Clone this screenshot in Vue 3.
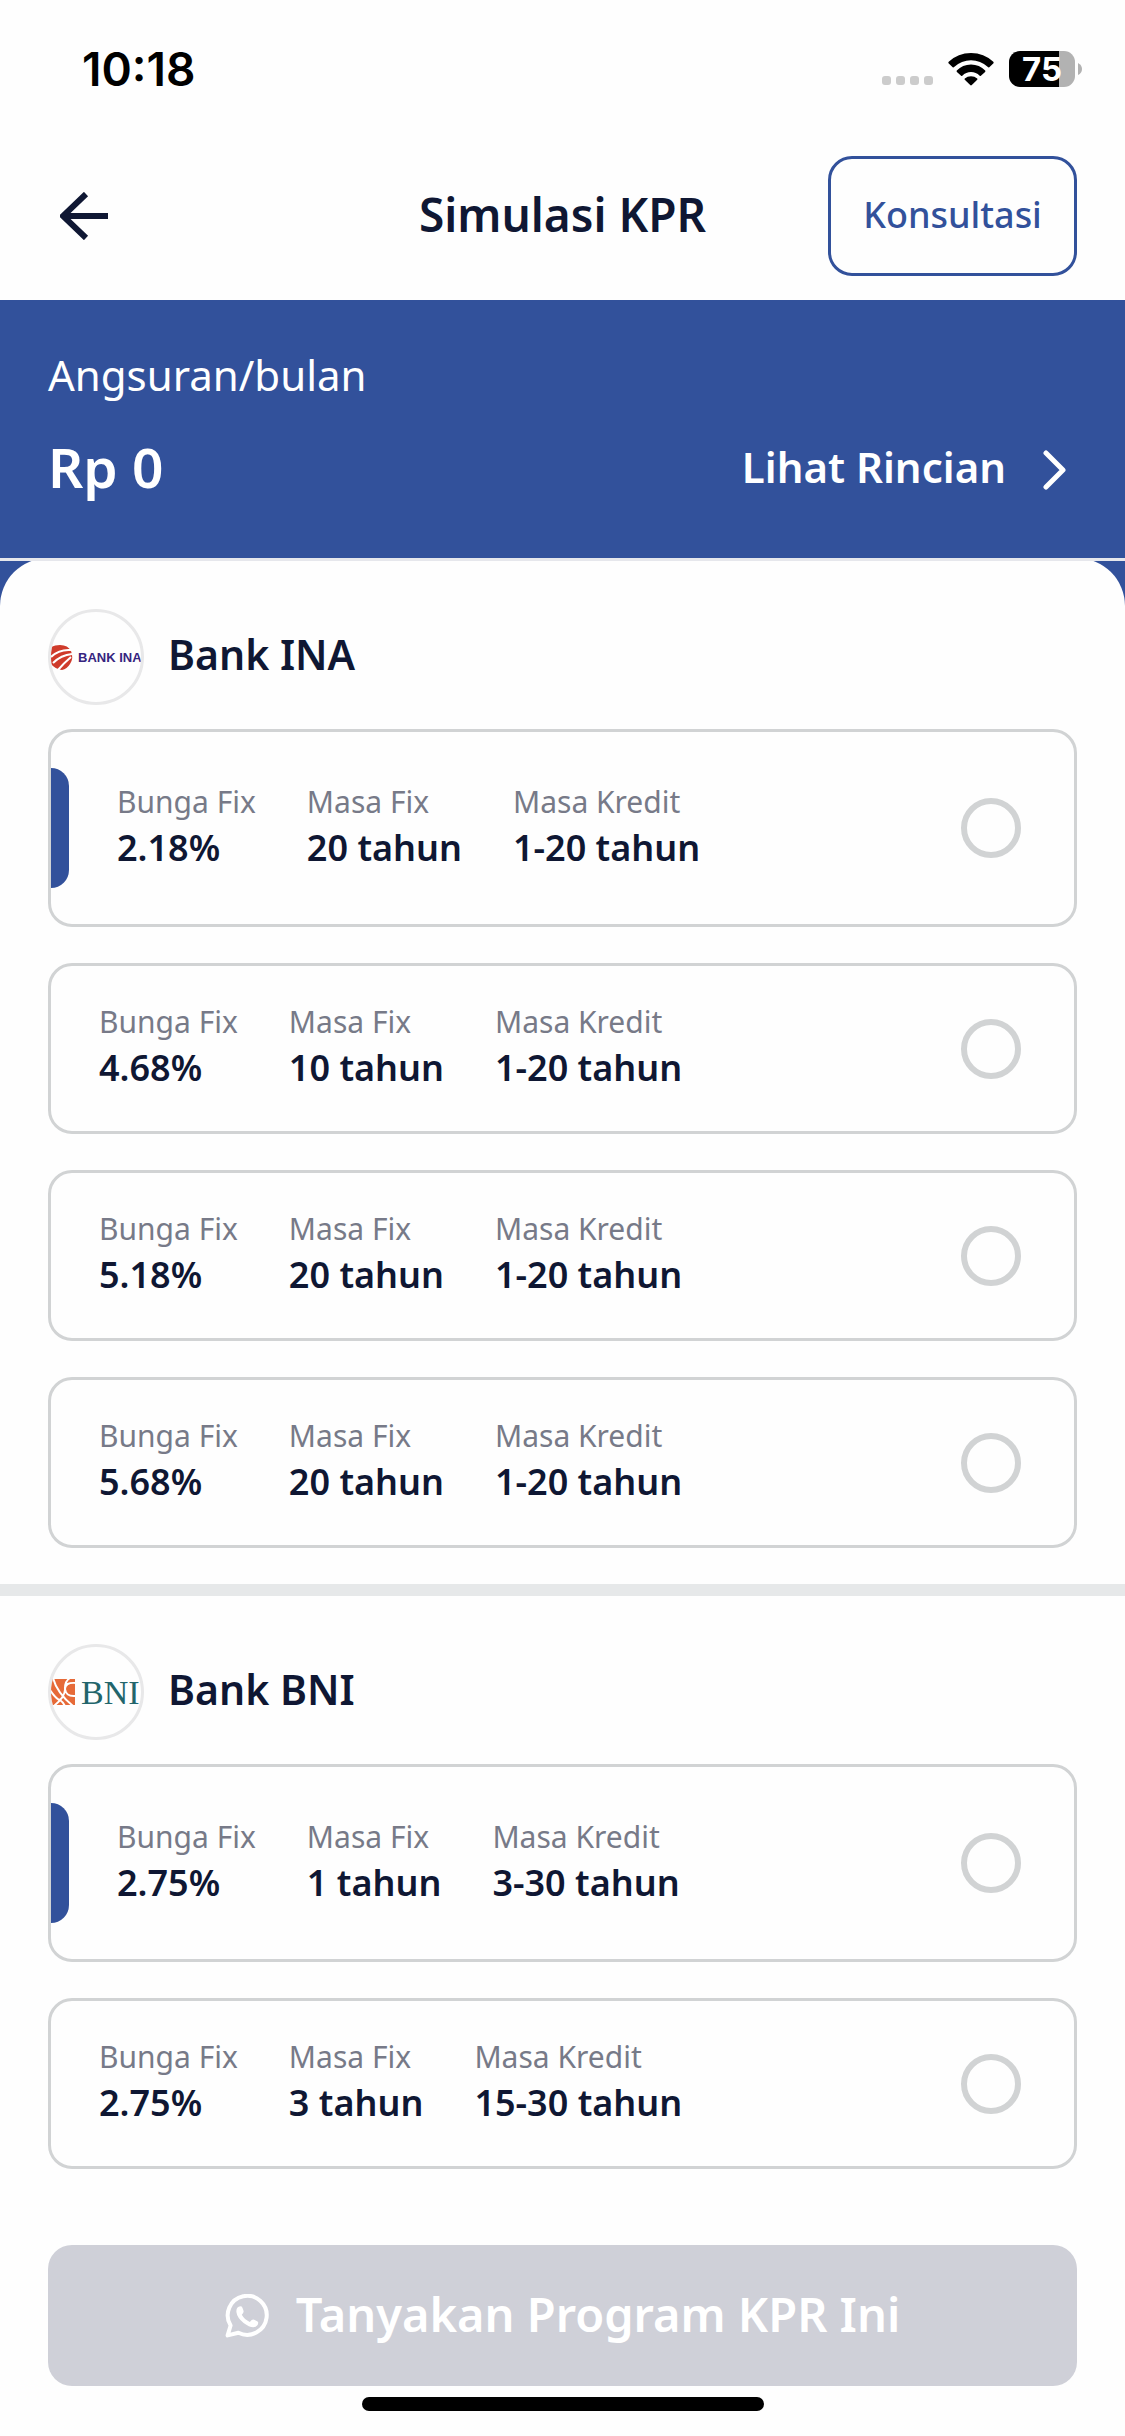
<script setup>
import { ref } from 'vue'

const selected = ref(null)

const banks = [
  {
    id: 'ina',
    name: 'Bank INA',
    programs: [
      { id: 'ina-1', rate: '2.18%', fixed: '20 tahun', credit: '1-20 tahun', featured: true },
      { id: 'ina-2', rate: '4.68%', fixed: '10 tahun', credit: '1-20 tahun' },
      { id: 'ina-3', rate: '5.18%', fixed: '20 tahun', credit: '1-20 tahun' },
      { id: 'ina-4', rate: '5.68%', fixed: '20 tahun', credit: '1-20 tahun' },
    ],
  },
  {
    id: 'bni',
    name: 'Bank BNI',
    programs: [
      { id: 'bni-1', rate: '2.75%', fixed: '1 tahun', credit: '3-30 tahun', featured: true },
      { id: 'bni-2', rate: '2.75%', fixed: '3 tahun', credit: '15-30 tahun' },
    ],
  },
]
</script>

<template>
  <div class="page">
    <div class="status">
      <time class="clock">10:18</time>
      <div class="indicators">
        <span class="signal"><i></i><i></i><i></i><i></i></span>
        <svg class="wifi" viewBox="0 0 46 34" aria-hidden="true">
          <path d="M0.5 11.2 Q0 10.4 0.7 9.8 Q10 1 23 1 Q36 1 45.3 9.8 Q46 10.4 45.5 11.2 L41.3 15.2 Q40.6 15.7 39.9 15.1 Q32.5 8.3 23 8.3 Q13.5 8.3 6.1 15.1 Q5.4 15.7 4.7 15.2 Z" />
          <path d="M8.8 18.6 Q14.5 12.5 23 12.5 Q31.5 12.5 37.2 18.6 Q37.7 19.2 37.1 19.9 L32.9 23.7 Q32.3 24.2 31.7 23.7 Q28 20 23 20 Q18 20 14.3 23.7 Q13.7 24.2 13.1 23.7 L8.9 19.9 Q8.3 19.2 8.8 18.6 Z" />
          <path d="M16.8 26.6 Q19.4 24.3 23 24.3 Q26.6 24.3 29.2 26.6 Q29.8 27.2 29.2 27.8 L23.8 33.1 Q23 33.8 22.2 33.1 L16.8 27.8 Q16.2 27.2 16.8 26.6 Z" />
        </svg>
        <span class="battery"><span class="level">75</span></span>
        <svg class="nub" viewBox="0 0 4 12" aria-hidden="true"><path d="M0 0 Q4 2 4 6 Q4 10 0 12 Z" /></svg>
      </div>
    </div>

    <header class="topbar">
      <button class="back" type="button" aria-label="Kembali">
        <svg viewBox="0 0 48 48" aria-hidden="true"><path d="M48 24 H4 M26 2 L3 24 L26 46" /></svg>
      </button>
      <h1>Simulasi KPR</h1>
      <button class="consult" type="button">Konsultasi</button>
    </header>

    <section class="summary">
      <p class="caption">Angsuran/bulan</p>
      <div class="amount-row">
        <strong class="amount">Rp 0</strong>
        <a class="detail" href="#rincian">
          Lihat Rincian
          <svg viewBox="0 0 24 40" aria-hidden="true"><path d="M3 3 L20 20 L3 37" /></svg>
        </a>
      </div>
    </section>

    <main class="sheet-wrap">
      <div class="sheet">
        <section v-for="bank in banks" :key="bank.id" class="bank">
          <div class="bank-head">
            <span class="logo">
              <svg v-if="bank.id === 'ina'" viewBox="0 0 90 90" aria-hidden="true">
                <path class="ina-mark" d="M0 35 Q4 33 9 33 Q17 33 20 39 Q23 46 19 52 Q16 57 11 58 Q4 57 0 52 Z" />
                <path class="ina-ray" d="M0 45 Q8 37 20 38 M2 51 Q10 43 21 42 M7 58 Q13 51 20 45" />
                <text class="ina-text" x="27" y="50">BANK INA</text>
              </svg>
              <svg v-else viewBox="0 0 90 90" aria-hidden="true">
                <rect class="bni-mark" x="0" y="32" width="24" height="26" />
                <path class="bni-line" d="M2 31 Q6 46 22 59 M-1 43 Q5 52 9 53 Q12 55 14 59 M25 36 Q14 35 14 42 Q15 50 25 49 M3 59 Q15 49 14 41 Q14 34 19 31" />
                <text class="bni-text" x="30" y="57">BNI</text>
              </svg>
            </span>
            <h2>{{ bank.name }}</h2>
          </div>

          <label
            v-for="program in bank.programs"
            :key="program.id"
            class="card"
            :class="{ featured: program.featured }"
          >
            <span v-if="program.featured" class="marker"></span>
            <span class="facts">
              <span class="fact"><span class="term">Bunga Fix</span><b>{{ program.rate }}</b></span>
              <span class="fact"><span class="term">Masa Fix</span><b>{{ program.fixed }}</b></span>
              <span class="fact"><span class="term">Masa Kredit</span><b>{{ program.credit }}</b></span>
            </span>
            <input v-model="selected" type="radio" name="program" :value="program.id" />
          </label>
        </section>
      </div>
    </main>

    <footer class="actions">
      <button class="ask" type="button" :disabled="!selected">
        <svg viewBox="0 0 44 44" aria-hidden="true">
          <path class="bubble" d="M2.6 41.4 L5.6 31.5 A19.5 19.5 0 1 1 13.4 38.7 Z" />
          <path class="phone" d="M12.3 13.8 Q14 11.6 16.6 12.4 Q17.4 12.8 18.6 17.2 Q18.8 18.6 16.8 20.8 Q19.5 25.6 24.8 28 Q27 25.4 28.4 25.6 Q33 27.4 33.2 28.4 Q33.6 31.4 30.6 32.8 Q26 34.6 18.6 29 Q12 23.6 11.4 18 Q11.2 15.4 12.3 13.8 Z" />
        </svg>
        <span>Tanyakan Program KPR Ini</span>
      </button>
      <div class="home"></div>
    </footer>
  </div>
</template>

<style>
body {
  background: #fefefe;
}
</style>

<style scoped>
.page {
  min-height: 100vh;
  display: flex;
  flex-direction: column;
  font-family: "Noto Sans", sans-serif;
  color: #0f1733;
  background: #fefefe;
}

.page * {
  box-sizing: border-box;
}

h1,
h2,
p {
  margin: 0;
}

button {
  font-family: inherit;
  border: 0;
  padding: 0;
  background: none;
}

svg {
  display: block;
  flex: none;
}

/* Status bar */
.status {
  display: flex;
  justify-content: space-between;
  align-items: center;
  height: 138px;
  padding: 0 43px 0 82px;
  color: #000;
  font-family: Inter, sans-serif;
}

.clock {
  font-size: 46px;
  font-weight: 600;
}

.indicators {
  display: flex;
  align-items: center;
}

.signal {
  display: flex;
  gap: 5px;
  margin: 22px 15px 0 0;
}

.signal i {
  width: 9px;
  height: 9px;
  border-radius: 3px;
  background: #ccc;
}

.wifi {
  width: 46px;
  height: 34px;
  margin-right: 15px;
}

.battery {
  width: 66px;
  height: 36px;
  border-radius: 11px;
  background: linear-gradient(90deg, #000 50px, #b2b2b2 50px);
  text-align: center;
}

.level {
  color: #fff;
  font-size: 33px;
  font-weight: 700;
  line-height: 36px;
}

.nub {
  width: 4px;
  height: 12px;
  margin-left: 3px;
  fill: #b2b2b2;
}

/* Title bar */
.topbar {
  display: grid;
  grid-template-columns: 1fr auto 1fr;
  align-items: center;
  padding: 18px 48px 24px;
}

.back {
  justify-self: start;
  margin-left: 12px;
}

.back svg {
  width: 48px;
  height: 48px;
  fill: none;
  stroke: #0f1733;
  stroke-width: 6;
}

h1 {
  padding-bottom: 4px;
  font-size: 46px;
  font-weight: 600;
  line-height: 60px;
}

.consult {
  justify-self: end;
  width: 249px;
  height: 120px;
  padding-bottom: 4px;
  border: 3px solid #32519b;
  border-radius: 24px;
  color: #32519b;
  font-size: 36px;
  font-weight: 500;
}

/* Monthly instalment */
.summary {
  padding: 45px 58px 55px 48px;
  background: #32519b;
  color: #fff;
}

.caption {
  font-size: 42px;
  line-height: 60px;
}

.amount-row {
  display: flex;
  justify-content: space-between;
  align-items: center;
  margin-top: 26px;
}

.amount {
  font-size: 55px;
  font-weight: 600;
  line-height: 72px;
}

.detail {
  display: flex;
  align-items: center;
  gap: 37px;
  color: #fff;
  font-size: 42px;
  font-weight: 600;
  line-height: 60px;
  text-decoration: none;
}

.detail svg {
  width: 24px;
  height: 40px;
  margin-top: 6px;
  fill: none;
  stroke: #fff;
  stroke-width: 5;
  stroke-linecap: round;
  stroke-linejoin: round;
}

/* Program list */
.sheet-wrap {
  background: linear-gradient(#32519b 96px, transparent 96px);
}

.sheet {
  position: relative;
  border-radius: 48px 48px 0 0;
  background: #fefefe;
}

.sheet::before {
  content: "";
  position: absolute;
  top: 0;
  left: 0;
  right: 0;
  height: 3px;
  background: #e6e7ec;
}

.bank {
  display: flex;
  flex-direction: column;
  gap: 36px;
  padding: 51px 48px 36px;
}

.bank + .bank {
  padding-top: 48px;
  border-top: 12px solid #e6e8e9;
}

.bank-head {
  display: flex;
  align-items: center;
  gap: 24px;
  margin-bottom: -12px;
}

.logo {
  width: 96px;
  height: 96px;
  border: 3px solid #e8e8e9;
  border-radius: 50%;
  overflow: hidden;
}

.logo svg {
  width: 90px;
  height: 90px;
}

.ina-mark {
  fill: #cf3b2b;
}

.ina-ray {
  fill: none;
  stroke: #fff;
  stroke-width: 2;
}

.ina-text {
  font: 700 13px "Liberation Sans", sans-serif;
  fill: #36247f;
}

.bni-mark {
  fill: #e66a38;
}

.bni-line {
  fill: none;
  stroke: #fff;
  stroke-width: 2;
}

.bni-text {
  font: 34px "Liberation Serif", serif;
  fill: #22656b;
}

h2 {
  padding-bottom: 6px;
  font-size: 41px;
  font-weight: 600;
  line-height: 60px;
}

.card {
  display: flex;
  align-items: center;
  padding: 36px 53px 36px 48px;
  border: 3px solid #d1d3d4;
  border-radius: 24px;
}

.featured {
  padding-left: 0;
}

.marker {
  width: 18px;
  height: 120px;
  margin-right: 48px;
  border-radius: 0 18px 18px 0;
  background: #32519b;
}

.facts {
  display: flex;
  flex: 1;
  gap: 51px;
}

.fact {
  display: flex;
  flex-direction: column;
}

.term {
  color: #777a88;
  font-size: 30px;
  line-height: 39px;
}

.fact b {
  font-size: 36px;
  font-weight: 600;
  line-height: 54px;
}

input {
  appearance: none;
  width: 60px;
  height: 60px;
  margin: 0;
  border: 6px solid #d1d3d4;
  border-radius: 50%;
}

input:checked {
  border: 18px solid #32519b;
}

/* Bottom action */
.actions {
  padding: 40px 48px 25px;
}

.ask {
  display: flex;
  justify-content: center;
  align-items: center;
  gap: 27px;
  width: 100%;
  height: 141px;
  border-radius: 24px;
  background: #32519b;
  color: #fff;
  font-size: 47px;
  font-weight: 600;
}

.ask:disabled {
  background: #cfd0d8;
}

.ask span {
  padding-bottom: 4px;
}

.ask svg {
  width: 44px;
  height: 44px;
}

.bubble {
  fill: none;
  stroke: #fff;
  stroke-width: 4;
  stroke-linejoin: round;
}

.phone {
  fill: #fff;
}

.home {
  width: 402px;
  max-width: 100%;
  height: 14px;
  margin: 11px auto 0;
  border-radius: 7px;
  background: #000;
}
</style>
